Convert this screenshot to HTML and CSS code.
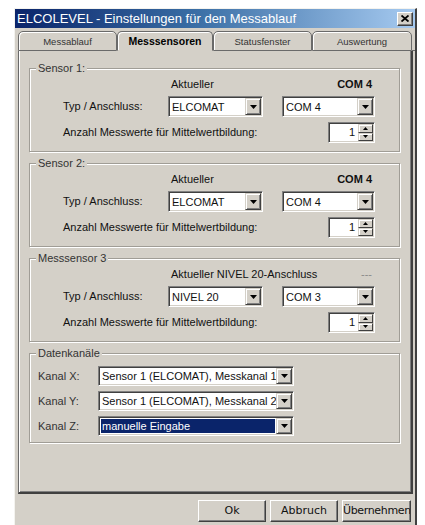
FILE: index.html
```html
<!DOCTYPE html>
<html lang="de">
<head>
<meta charset="utf-8">
<title>ELCOLEVEL - Einstellungen für den Messablauf</title>
<link rel="stylesheet" href="styles.css">
</head>
<body>
<div class="window">
  <div class="titlebar">
    <span class="title">ELCOLEVEL - Einstellungen für den Messablauf</span>
    <span class="close">
      <svg width="8" height="7" viewBox="0 0 8 7"><path d="M0.5 0.5L7.5 6.5M7.5 0.5L0.5 6.5" stroke="#000" stroke-width="1.8"/></svg>
    </span>
  </div>

  <div class="tabs">
    <div class="tab t1">Messablauf</div>
    <div class="tab t2 active">Messsensoren</div>
    <div class="tab t3">Statusfenster</div>
    <div class="tab t4">Auswertung</div>
    <div class="tab-fill"></div>
  </div>

  <div class="panel">
    <section class="group">
      <div class="legend">Sensor 1:</div>
      <div class="sensor-grid">
        <div class="current"><span>Aktueller</span><b>COM 4</b></div>
        <span class="lbl">Typ / Anschluss:</span>
        <div class="combo"><span class="combo-text">ELCOMAT</span><span class="combo-btn"><svg width="7" height="4" viewBox="0 0 7 4"><path d="M0 0H7L3.5 4Z"/></svg></span></div>
        <div class="combo port"><span class="combo-text">COM 4</span><span class="combo-btn"><svg width="7" height="4" viewBox="0 0 7 4"><path d="M0 0H7L3.5 4Z"/></svg></span></div>
        <span class="lbl wide">Anzahl Messwerte für Mittelwertbildung:</span>
        <div class="spin"><span class="spin-val">1</span><span class="spin-btns"><span class="spin-b"><svg width="5" height="3" viewBox="0 0 5 3"><path d="M2.5 0L5 3H0Z"/></svg></span><span class="spin-b"><svg width="5" height="3" viewBox="0 0 5 3"><path d="M0 0H5L2.5 3Z"/></svg></span></span></div>
      </div>
    </section>

    <section class="group">
      <div class="legend">Sensor 2:</div>
      <div class="sensor-grid">
        <div class="current"><span>Aktueller</span><b>COM 4</b></div>
        <span class="lbl">Typ / Anschluss:</span>
        <div class="combo"><span class="combo-text">ELCOMAT</span><span class="combo-btn"><svg width="7" height="4" viewBox="0 0 7 4"><path d="M0 0H7L3.5 4Z"/></svg></span></div>
        <div class="combo port"><span class="combo-text">COM 4</span><span class="combo-btn"><svg width="7" height="4" viewBox="0 0 7 4"><path d="M0 0H7L3.5 4Z"/></svg></span></div>
        <span class="lbl wide">Anzahl Messwerte für Mittelwertbildung:</span>
        <div class="spin"><span class="spin-val">1</span><span class="spin-btns"><span class="spin-b"><svg width="5" height="3" viewBox="0 0 5 3"><path d="M2.5 0L5 3H0Z"/></svg></span><span class="spin-b"><svg width="5" height="3" viewBox="0 0 5 3"><path d="M0 0H5L2.5 3Z"/></svg></span></span></div>
      </div>
    </section>

    <section class="group">
      <div class="legend">Messsensor 3</div>
      <div class="sensor-grid">
        <div class="current"><span>Aktueller NIVEL 20-Anschluss</span><span class="none">---</span></div>
        <span class="lbl">Typ / Anschluss:</span>
        <div class="combo"><span class="combo-text">NIVEL 20</span><span class="combo-btn"><svg width="7" height="4" viewBox="0 0 7 4"><path d="M0 0H7L3.5 4Z"/></svg></span></div>
        <div class="combo port"><span class="combo-text">COM 3</span><span class="combo-btn"><svg width="7" height="4" viewBox="0 0 7 4"><path d="M0 0H7L3.5 4Z"/></svg></span></div>
        <span class="lbl wide">Anzahl Messwerte für Mittelwertbildung:</span>
        <div class="spin"><span class="spin-val">1</span><span class="spin-btns"><span class="spin-b"><svg width="5" height="3" viewBox="0 0 5 3"><path d="M2.5 0L5 3H0Z"/></svg></span><span class="spin-b"><svg width="5" height="3" viewBox="0 0 5 3"><path d="M0 0H5L2.5 3Z"/></svg></span></span></div>
      </div>
    </section>

    <section class="group channels">
      <div class="legend">Datenkanäle</div>
      <div class="channel-grid">
        <span class="lbl">Kanal X:</span>
        <div class="combo"><span class="combo-text">Sensor 1 (ELCOMAT), Messkanal 1</span><span class="combo-btn"><svg width="7" height="4" viewBox="0 0 7 4"><path d="M0 0H7L3.5 4Z"/></svg></span></div>
        <span class="lbl">Kanal Y:</span>
        <div class="combo"><span class="combo-text">Sensor 1 (ELCOMAT), Messkanal 2</span><span class="combo-btn"><svg width="7" height="4" viewBox="0 0 7 4"><path d="M0 0H7L3.5 4Z"/></svg></span></div>
        <span class="lbl">Kanal Z:</span>
        <div class="combo"><span class="combo-text"><span class="selected">manuelle Eingabe</span></span><span class="combo-btn"><svg width="7" height="4" viewBox="0 0 7 4"><path d="M0 0H7L3.5 4Z"/></svg></span></div>
      </div>
    </section>
  </div>

  <div class="buttons">
    <div class="btn">Ok</div>
    <div class="btn">Abbruch</div>
    <div class="btn wide-btn">Übernehmen</div>
  </div>
</div>
</body>
</html>
```

FILE: styles.css
```css
html, body {
  margin: 0;
  padding: 0;
  background: #fff;
  overflow: hidden;
}

body {
  font-family: "Liberation Sans", Arial, sans-serif;
  font-size: 11px;
  color: #111;
}

/* dialog frame */
.window {
  margin: 8px 0 0 14px;
  width: 400px;
  height: 540px;
  background: #d4d0c8;
  border-style: solid;
  border-width: 1px 2px 0 1px;
  border-color: #f4f3ef #404040 #404040 #f4f3ef;
}

.titlebar {
  height: 19px;
  display: flex;
  align-items: center;
  justify-content: space-between;
  background: linear-gradient(to right, #0a246a 0%, #3a6ea5 45%, #a6caf0 100%);
}

.title {
  padding-left: 2px;
  color: #fff;
  font-size: 13px;
  line-height: 19px;
  white-space: nowrap;
}

.close {
  width: 16px;
  height: 14px;
  margin-right: 2px;
  box-sizing: border-box;
  display: flex;
  align-items: center;
  justify-content: center;
  background: #d4d0c8;
  border: 1px solid;
  border-color: #fff #404040 #404040 #fff;
  box-shadow: inset -1px -1px #808080;
}

/* tab strip */
.tabs {
  display: flex;
  margin: 3px 0 0 3px;
  height: 20px;
}

.tab {
  box-sizing: border-box;
  height: 20px;
  padding-top: 4px;
  text-align: center;
  font-size: 9.5px;
  color: #333;
  border: 1px solid #6a6a6a;
  border-radius: 5px 5px 0 0;
  box-shadow: inset 1px 1px #fff;
  background: #d4d0c8;
}

.t1 { width: 99px; }
.t2 { width: 96px; }
.t3 { width: 99px; }
.t4 { width: 100px; }

.tab.active {
  border-bottom-color: #d4d0c8;
  font-weight: bold;
  font-size: 10.5px;
  color: #000;
  padding-top: 3px;
}

.tab-fill {
  flex: 1;
  border-bottom: 1px solid #6a6a6a;
}

.panel {
  box-sizing: border-box;
  height: 443px;
  margin: 0 2px 0 3px;
  padding: 17px 11px 0 10px;
  border-style: solid;
  border-width: 0 2px 2px 1px;
  border-color: #6a6a6a #404040 #404040 #6a6a6a;
  box-shadow: inset 1px 0 #fff, inset -1px -1px #808080;
}

/* etched group box */
.group {
  border: 1px solid #a09d96;
  box-shadow: inset 1px 1px #fff, 1px 1px #fff;
  padding: 0 0 8px 0;
  margin-bottom: 11px;
}

.legend {
  margin: -7px 0 0 6px;
  padding: 0 2px;
  width: fit-content;
  line-height: 13px;
  background: #d4d0c8;
  color: #333;
}

/* label | type combo | spacer | port combo */
.sensor-grid {
  display: grid;
  grid-template-columns: 105px 95px 19px 93px;
  grid-template-rows: 13px 21px 21px;
  row-gap: 5px;
  margin: 3px 0 0 33px;
  align-items: center;
}

.current {
  grid-column: 2 / 5;
  display: flex;
  justify-content: space-between;
  padding: 0 3px;
  line-height: 13px;
  white-space: nowrap;
}

.current .none {
  color: #8a8a8a;
}

.lbl {
  white-space: nowrap;
  line-height: 13px;
}

.lbl.wide {
  grid-column: 1 / 4;
}

.combo.port {
  grid-column: 4;
}

/* sunken combo box */
.combo {
  box-sizing: border-box;
  height: 21px;
  display: flex;
  background: #fff;
  border: 1px solid;
  border-color: #808080 #fff #fff #808080;
  box-shadow: inset 1px 1px #404040, inset -1px -1px #d4d0c8;
  padding: 1px;
}

.combo-text {
  flex: 1;
  min-width: 0;
  overflow: hidden;
  white-space: nowrap;
  padding-left: 2px;
  display: flex;
  align-items: center;
}

.combo-btn {
  box-sizing: border-box;
  width: 16px;
  flex: none;
  display: flex;
  align-items: center;
  justify-content: center;
  background: #d4d0c8;
  border: 1px solid;
  border-color: #d4d0c8 #404040 #404040 #d4d0c8;
  box-shadow: inset 1px 1px #fff, inset -1px -1px #808080;
}

.combo-btn svg,
.spin-b svg {
  fill: #000;
}

/* numeric spinner */
.spin {
  grid-column: 4;
  justify-self: end;
  box-sizing: border-box;
  width: 47px;
  height: 21px;
  display: flex;
  background: #fff;
  border: 1px solid;
  border-color: #808080 #fff #fff #808080;
  box-shadow: inset 1px 1px #404040, inset -1px -1px #d4d0c8;
  padding: 1px;
}

.spin-val {
  flex: 1;
  text-align: right;
  padding-right: 3px;
  line-height: 17px;
}

.spin-btns {
  width: 15px;
  display: flex;
  flex-direction: column;
}

.spin-b {
  flex: 1;
  box-sizing: border-box;
  display: flex;
  align-items: center;
  justify-content: center;
  background: #d4d0c8;
  border: 1px solid;
  border-color: #d4d0c8 #404040 #404040 #d4d0c8;
  box-shadow: inset 1px 1px #fff;
}

/* data channel group */
.group.channels {
  padding-bottom: 6px;
}

.channel-grid {
  display: grid;
  grid-template-columns: 60px 196px;
  grid-auto-rows: 20px;
  row-gap: 5px;
  margin: 6px 0 0 8px;
  align-items: center;
}

.channel-grid .lbl {
  color: #333;
}

.channel-grid .combo {
  height: 20px;
}

.selected {
  flex: 1;
  align-self: stretch;
  margin: 1px 1px 1px -1px;
  padding-left: 1px;
  background: #0a246a;
  color: #fff;
  display: flex;
  align-items: center;
}

/* dialog buttons */
.buttons {
  display: flex;
  justify-content: flex-end;
  gap: 4px;
  margin: 6px 4px 0 0;
}

.btn {
  box-sizing: border-box;
  width: 68px;
  height: 22px;
  overflow: hidden;
  white-space: nowrap;
  text-align: center;
  font-family: "DejaVu Sans", sans-serif;
  font-size: 11px;
  line-height: 19px;
  color: #111;
  border: 1px solid;
  border-color: #fff #404040 #404040 #fff;
  box-shadow: inset -1px -1px #808080;
}

.btn.wide-btn {
  width: 69px;
  letter-spacing: -0.35px;
}
```
